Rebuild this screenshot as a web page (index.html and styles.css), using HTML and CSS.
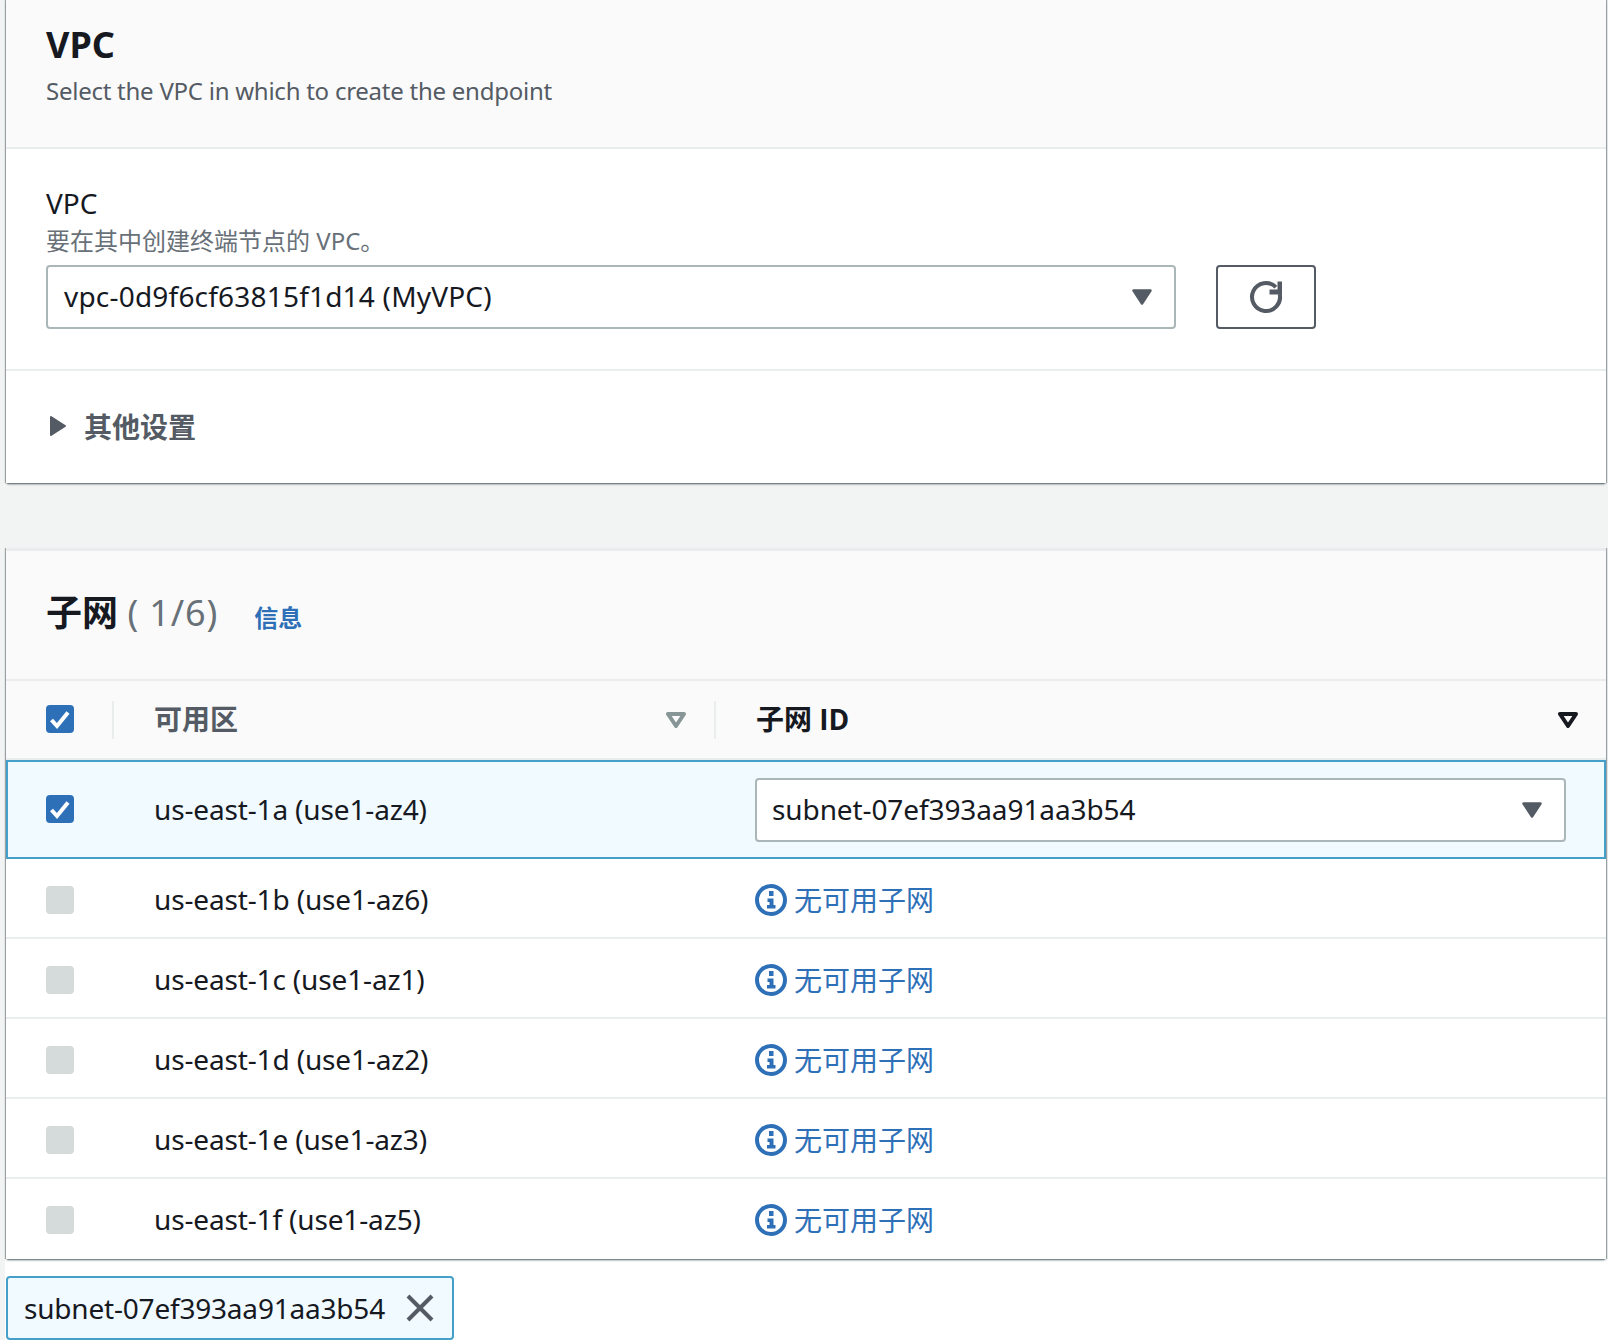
FILE: index.html
```html
<!DOCTYPE html>
<html lang="zh-CN">
<head>
<meta charset="utf-8">
<title>VPC endpoint</title>
<link rel="stylesheet" href="styles.css">
</head>
<body>
<svg class="defs" width="0" height="0" aria-hidden="true">
  <symbol id="caret" viewBox="0 0 20 16"><path d="M1.500 1.500h17L10 14.500z" fill="currentColor" stroke="currentColor" stroke-width="2.500" stroke-linejoin="round"/></symbol>
  <symbol id="filter" viewBox="0 0 20 16"><path d="M2 2h16L10 14z" fill="none" stroke="currentColor" stroke-width="4" stroke-linejoin="round"/></symbol>
  <symbol id="check" viewBox="0 0 28 28"><path d="M5.500 15l5.500 6L22 7.500" fill="none" stroke="#fff" stroke-width="4"/></symbol>
  <symbol id="info" viewBox="0 0 32 32"><circle cx="16" cy="16" r="14" fill="none" stroke="currentColor" stroke-width="4"/><path d="M14 7h4.500v5H14zM12.500 14.500h6v6.500H20.500v3.500h-8.500V21h2.500v-3h-2z" fill="currentColor"/></symbol>
</svg>
<main class="page">
  <div class="cards">
    <section class="card vpc-card">
      <header class="card-head">
        <h2 class="card-title">VPC</h2>
        <p class="card-desc">Select the VPC in which to create the endpoint</p>
      </header>
      <div class="vpc-body">
        <div class="field-label">VPC</div>
        <div class="field-hint">要在其中创建终端节点的 VPC。</div>
        <div class="field-row">
          <div class="select vpc-select">
            <span>vpc-0d9f6cf63815f1d14 (MyVPC)</span>
            <svg class="caret"><use href="#caret"/></svg>
          </div>
          <button class="refresh" type="button" aria-label="refresh">
            <svg width="36" height="36" viewBox="0 0 36 36"><path d="M31.700 15A14 14 0 1 1 27.900 8.100" fill="none" stroke="currentColor" stroke-width="4"/><path d="M29.500 2.500H34V15.500H21.500V10.500H29.500z" fill="currentColor"/></svg>
          </button>
        </div>
      </div>
      <div class="more">
        <svg class="more-arrow" width="18" height="22" viewBox="0 0 18 22"><path d="M2 2l14 9-14 9z" fill="currentColor" stroke="currentColor" stroke-width="2" stroke-linejoin="round"/></svg>
        <span>其他设置</span>
      </div>
    </section>

    <section class="card subnet-card">
      <header class="subnet-head">
        <h2 class="subnet-title">子网 <span class="count">( 1/6)</span></h2>
        <a class="info-link">信息</a>
      </header>
      <div class="row head-row">
        <div class="cell-check"><span class="cb on"><svg width="28" height="28"><use href="#check"/></svg></span></div>
        <div class="cell-az th">
          <span class="sep"></span><span class="th-muted">可用区</span>
          <svg class="filter muted"><use href="#filter"/></svg>
        </div>
        <div class="cell-id th">
          <span class="sep"></span><span class="th-strong">子网 ID</span>
          <svg class="filter strong"><use href="#filter"/></svg>
        </div>
      </div>
      <div class="row selected">
        <div class="cell-check"><span class="cb on"><svg width="28" height="28"><use href="#check"/></svg></span></div>
        <div class="cell-az">us-east-1a (use1-az4)</div>
        <div class="cell-id">
          <div class="select subnet-select">
            <span>subnet-07ef393aa91aa3b54</span>
            <svg class="caret"><use href="#caret"/></svg>
          </div>
        </div>
      </div>
      <div class="row">
        <div class="cell-check"><span class="cb"></span></div>
        <div class="cell-az">us-east-1b (use1-az6)</div>
        <div class="cell-id none"><svg class="info" width="32" height="32"><use href="#info"/></svg><span class="none-text">无可用子网</span></div>
      </div>
      <div class="row">
        <div class="cell-check"><span class="cb"></span></div>
        <div class="cell-az">us-east-1c (use1-az1)</div>
        <div class="cell-id none"><svg class="info" width="32" height="32"><use href="#info"/></svg><span class="none-text">无可用子网</span></div>
      </div>
      <div class="row">
        <div class="cell-check"><span class="cb"></span></div>
        <div class="cell-az">us-east-1d (use1-az2)</div>
        <div class="cell-id none"><svg class="info" width="32" height="32"><use href="#info"/></svg><span class="none-text">无可用子网</span></div>
      </div>
      <div class="row">
        <div class="cell-check"><span class="cb"></span></div>
        <div class="cell-az">us-east-1e (use1-az3)</div>
        <div class="cell-id none"><svg class="info" width="32" height="32"><use href="#info"/></svg><span class="none-text">无可用子网</span></div>
      </div>
      <div class="row last">
        <div class="cell-check"><span class="cb"></span></div>
        <div class="cell-az">us-east-1f (use1-az5)</div>
        <div class="cell-id none"><svg class="info" width="32" height="32"><use href="#info"/></svg><span class="none-text">无可用子网</span></div>
      </div>
    </section>
  </div>

  <div class="tokens">
    <div class="token">
      <span class="token-text">subnet-07ef393aa91aa3b54</span>
      <svg width="28" height="28" viewBox="0 0 28 28"><path d="M2 2l24 24M26 2L2 26" fill="none" stroke="currentColor" stroke-width="4"/></svg>
    </div>
  </div>
</main>
</body>
</html>
```
FILE: styles.css
```css
* { box-sizing: border-box; }
html, body { margin: 0; height: 1340px; overflow: hidden; background: #fff; }
body { font-family: "Noto Sans", "Noto Sans CJK SC", sans-serif; color: #16191f; font-size: 28px; }
.defs { position: absolute; }
.page { display: flex; flex-direction: column; height: 1340px; background: linear-gradient(#f2f3f3, #f2f3f3) left/5px 100% no-repeat; }
.cards { background: #f2f3f3; height: 1259px; padding: 0 2px 0 6px; }

.card { background: #fff; box-shadow: 0 2px 2px -1px rgba(0,28,36,.65), -1px 0 1px 0 rgba(0,28,36,.35), 1px 0 1px 0 rgba(0,28,36,.35); clip-path: inset(0 -4px -4px -4px); }
.vpc-card { height: 483px; }

.card-head { height: 149px; background: #fafafa; border-bottom: 2px solid #eaeded; padding: 23px 40px 0; }
.card-title { margin: 0; font-size: 36px; line-height: 44px; font-weight: 700; }
.card-desc { margin: 6px 0 0; font-size: 24px; line-height: 36px; color: #545b64; letter-spacing: -0.25px; }

.vpc-body { height: 222px; padding: 36px 40px 0; border-bottom: 2px solid #eaeded; }
.field-label { font-size: 28px; line-height: 36px; }
.field-hint { font-size: 24px; line-height: 36px; color: #687078; margin-top: 2px; }
.field-row { display: flex; gap: 40px; margin-top: 6px; align-items: stretch; }

.select { display: flex; align-items: center; justify-content: space-between; height: 64px; background: #fff; border: 2px solid #aab7b8; border-radius: 4px; padding: 0 22px 0 16px; white-space: nowrap; }
.select span { margin-top: -2px; }
.vpc-select { width: 1130px; letter-spacing: 0.2px; }
.caret { width: 20px; height: 16px; color: #545b64; }
.refresh { width: 100px; height: 64px; background: #fff; border: 2px solid #545b64; border-radius: 4px; color: #545b64; padding: 0; display: flex; align-items: center; justify-content: center; }

.more { display: flex; align-items: center; height: 110px; padding-left: 43px; color: #545b64; font-size: 28px; font-weight: 700; }
.more-arrow { margin-right: 17px; }

.subnet-card { margin-top: 65px; height: 711px; border-top: 3px solid #eaeded; }
.subnet-head { height: 130px; background: #fafafa; border-bottom: 2px solid #eaeded; display: flex; align-items: center; padding: 0 40px 4px; }
.subnet-title { margin: 0; font-size: 36px; font-weight: 700; line-height: 44px; }
.count { color: #687078; font-weight: 400; letter-spacing: 0.9px; }
.info-link { margin-left: 36px; margin-top: 6px; color: #2e70b8; font-size: 24px; font-weight: 700; }

.row { display: grid; grid-template-columns: 106px 602px 1fr; height: 80px; padding-top: 4px; align-items: center; border-bottom: 2px solid #eaeded; }
.row.last { border-bottom: 0; padding-top: 2px; }
.cell-check { padding-left: 40px; display: flex; }
.cb { width: 28px; height: 28px; border-radius: 4px; background: #d5dbdb; display: block; }
.cb.on { background: #2e70b8; }
.cb svg { display: block; }

.head-row { height: 79px; padding-top: 0; background: #fafafa; border-bottom: 2px solid #eaeded; }
.head-row .cell-check { margin-top: -2px; }
.th { display: flex; align-items: center; height: 38px; font-weight: 700; }
.sep { width: 2px; height: 38px; background: #eaeded; margin-right: 40px; flex: none; }
.th-muted { color: #545b64; flex: 1; margin-top: -4px; }
.th-strong { flex: 1; margin-top: -4px; font-family: "Open Sans", "Noto Sans CJK SC", sans-serif; }
.filter { width: 20px; height: 16px; }
.filter.muted { color: #879596; margin-right: 28px; }
.filter.strong { color: #16191f; margin-right: 28px; }

.cell-az { padding-left: 42px; margin-top: -2px; letter-spacing: -0.15px; }
.cell-id { padding-left: 41px; }
.none { display: flex; align-items: center; gap: 7px; color: #2e70b8; }
.none-text { margin-top: -3px; }
.cell-az.th, .cell-id.th { padding-left: 0; margin-top: 0; letter-spacing: 0; }
.info { flex: none; }

.selected { height: 99px; padding-top: 0; background: #f1faff; border: 2px solid #44a0c8; grid-template-columns: 104px 602px 1fr; }
.selected .cell-check { padding-left: 38px; margin-top: -2px; }
.subnet-select { width: 811px; background: #fff; padding: 0 22px 0 15px; letter-spacing: -0.1px; }

.tokens { margin: 17px 0 0 6px; }
.token { width: 448px; height: 64px; background: #f1faff; border: 2px solid #44a0c8; border-radius: 4px; display: flex; align-items: center; gap: 21px; padding: 0 16px; color: #16191f; white-space: nowrap; }
.token-text { letter-spacing: -0.2px; margin-top: -1px; }
.token svg { color: #545b64; flex: none; }
```
